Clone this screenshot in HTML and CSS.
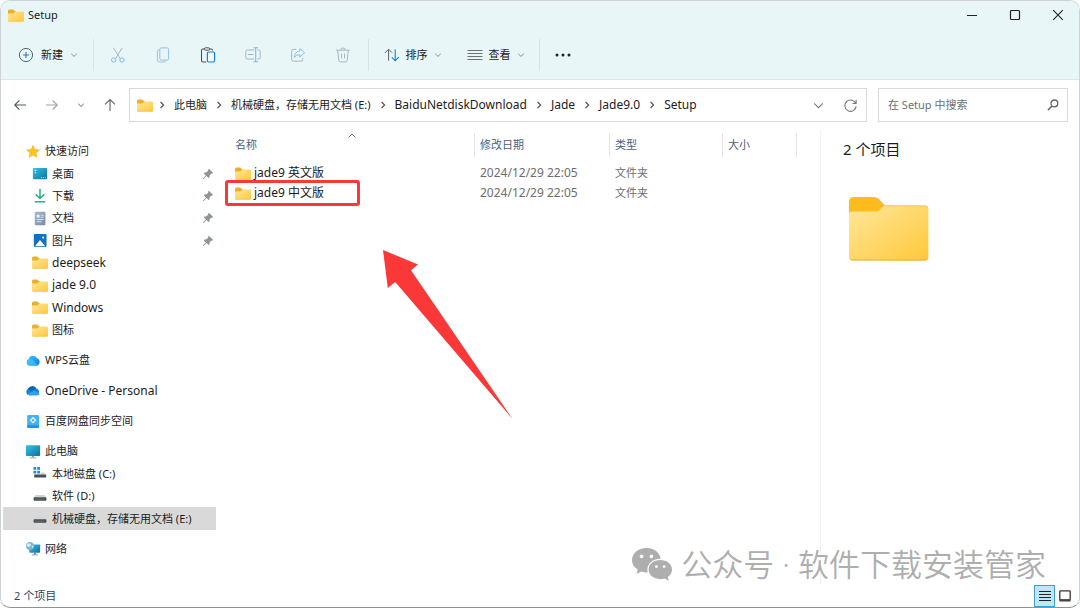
FILE: index.html
```html
<!DOCTYPE html>
<html lang="zh-CN">
<head>
<meta charset="utf-8">
<meta name="viewport" content="width=device-width, initial-scale=1">
<title>Setup</title>
<link rel="stylesheet" href="styles.css">
</head>
<body>
<svg class="defs" aria-hidden="true">
  <defs>
    <linearGradient id="folderFront" x1="0" y1="0" x2="1" y2="1">
      <stop offset="0" stop-color="#ffe79b"/><stop offset="1" stop-color="#ffc83a"/>
    </linearGradient>
    <linearGradient id="teal" x1="0" y1="0" x2="1" y2="1">
      <stop offset="0" stop-color="#35c5dd"/><stop offset="1" stop-color="#0d6fa8"/>
    </linearGradient>
    <linearGradient id="cloudBlue" x1="0" y1="0" x2="1" y2="1">
      <stop offset="0" stop-color="#38d0f5"/><stop offset="1" stop-color="#1a6cf0"/>
    </linearGradient>
    <linearGradient id="docGrey" x1="0" y1="0" x2="1" y2="1">
      <stop offset="0" stop-color="#a9bbd0"/><stop offset="1" stop-color="#7489a6"/>
    </linearGradient>
    <symbol id="folder" viewBox="0 0 16 13">
      <path d="M0 2.2Q0 .6 1.4.6H5.2L7 2.3H8V6H0z" fill="#eab02c"/>
      <path d="M0 4.6H5.4L7.3 2.4H14.8Q16 2.4 16 3.6V11.4Q16 12.6 14.8 12.6H1.2Q0 12.6 0 11.4z" fill="url(#folderFront)"/>
      <path d="M.6 12.3H15.4" stroke="#eeb83c" stroke-width=".6"/>
    </symbol>
    <symbol id="chev-down" viewBox="0 0 8 8"><path d="M1.2 2.8L4 5.4L6.8 2.8" fill="none" stroke="currentColor"/></symbol>
    <symbol id="chev-right" viewBox="0 0 8 8"><path d="M2.6 1L5.6 4L2.6 7" fill="none" stroke="currentColor" stroke-width="1.2"/></symbol>
    <symbol id="pin" viewBox="0 0 12 12">
      <path d="M6.9.8L11.2 5L10 5.8L9.3 5.6L7.6 7.4L7.5 9.4L6.6 10.1L4.5 8L1.6 11H1V10.4L3.9 7.4L1.8 5.4L2.6 4.4L4.6 4.3L6.3 2.6L6.1 1.8z" fill="#8d9498"/>
    </symbol>
    <symbol id="drive" viewBox="0 0 16 14">
      <path d="M3.6 5.4H12.4L14.2 8H1.8z" fill="#d3d5d5"/>
      <rect x="1.6" y="7.8" width="12.8" height="3.4" rx=".6" fill="#4b4f52"/>
      <path d="M3 9.7H12" stroke="#6d7174" stroke-width=".8"/>
    </symbol>
  </defs>
</svg>

<div class="window">
  <header class="chrome">
    <div class="titlebar">
      <svg class="ico-folder" viewBox="0 0 16 13"><use href="#folder"/></svg>
      <span class="window-title">Setup</span>
      <div class="window-controls">
        <button type="button" aria-label="最小化"><svg viewBox="0 0 12 12"><path d="M1 6.5H11" stroke="#222"/></svg></button>
        <button type="button" aria-label="最大化"><svg viewBox="0 0 12 12"><rect x="1.5" y="1.5" width="9" height="9" rx="1" fill="none" stroke="#222" stroke-width="1.2"/></svg></button>
        <button type="button" aria-label="关闭"><svg viewBox="0 0 12 12"><path d="M1.2 1.2L10.8 10.8M10.8 1.2L1.2 10.8" stroke="#222" stroke-width="1.1"/></svg></button>
      </div>
    </div>
    <div class="toolbar" role="toolbar" aria-label="命令">
      <button type="button" class="tool tool-new">
        <svg class="ico" viewBox="0 0 16 16" fill="none"><circle cx="8" cy="8" r="6.6" stroke="#5b6468"/><path d="M8 5V11M5 8H11" stroke="#1b7fd0" stroke-width="1.1"/></svg>
        <span>新建</span>
        <svg class="chev"><use href="#chev-down"/></svg>
      </button>
      <button type="button" class="tool tool-icon" aria-label="剪切" disabled>
        <svg class="ico" viewBox="0 0 16 16" fill="none"><path d="M3.4.8L10.2 11.6M12.2.8L5.6 11.6" stroke="#a9b6bb"/><circle cx="3.7" cy="13" r="2.2" stroke="#7fbbe6"/><circle cx="12" cy="13" r="2.2" stroke="#7fbbe6"/></svg>
      </button>
      <button type="button" class="tool tool-icon" aria-label="复制" disabled>
        <svg class="ico" viewBox="0 0 16 16" fill="none"><path d="M4.6 2.8H3.8Q2.4 2.8 2.4 4.2V13Q2.4 15 4.4 15H9.4Q10.8 15 10.8 13.6" stroke="#a9c3cc"/><rect x="4.8" y=".9" width="8.8" height="12.2" rx="1.4" stroke="#8cc1e6"/></svg>
      </button>
      <button type="button" class="tool tool-icon" aria-label="粘贴">
        <svg class="ico" viewBox="0 0 16 16" fill="none"><path d="M6.2 15H2.9Q1.5 15 1.5 13.6V3.4Q1.5 2 2.9 2H4.4M9.6 2H11.2Q12.6 2 12.6 3.6" stroke="#4a5054" stroke-width="1.1"/><rect x="4.4" y=".8" width="5.2" height="2.4" rx="1.1" stroke="#4a5054"/><rect x="7.4" y="5" width="7.2" height="10" rx="1.2" stroke="#1b7fd0" stroke-width="1.2" fill="#eef8fd"/></svg>
      </button>
      <button type="button" class="tool tool-icon" aria-label="重命名" disabled>
        <svg class="ico" viewBox="0 0 16 16" fill="none"><path d="M9 3H2.2Q.8 3 .8 4.4V10.6Q.8 12 2.2 12H9M12.4 3H13.8Q15.2 3 15.2 4.4V10.6Q15.2 12 13.8 12H12.4" stroke="#a9b6bb"/><path d="M8.4.8H13M10.7.8V14.8M8.4 14.8H13M3.2 7.5H8.4" stroke="#7fbbe6" stroke-width="1.1"/></svg>
      </button>
      <button type="button" class="tool tool-icon" aria-label="共享" disabled>
        <svg class="ico" viewBox="0 0 16 16" fill="none"><path d="M6.2 2.4H3.4Q1.6 2.4 1.6 4.2V12.4Q1.6 14.2 3.4 14.2H11Q12.8 14.2 12.8 12.4V11" stroke="#a9b6bb"/><path d="M9.8 1.6L14.6 5.8L9.8 10V7.6Q6.4 7.4 4.4 10.4Q4.8 4.6 9.8 4z" stroke="#8cc1e6" stroke-linejoin="round"/></svg>
      </button>
      <button type="button" class="tool tool-icon" aria-label="删除" disabled>
        <svg class="ico" viewBox="0 0 16 16" fill="none" stroke="#a9b6bb"><path d="M1.2 3.2H14.8M5.8 3Q5.8 1 8 1T10.2 3M2.6 3.2L3.8 13.4Q4 14.9 5.4 14.9H10.6Q12 14.9 12.2 13.4L13.4 3.2M6.5 6.6V11.4M9.5 6.6V11.4"/></svg>
      </button>
      <button type="button" class="tool tool-sort">
        <svg class="ico" viewBox="0 0 16 16" fill="none"><path d="M4.6 13.6V2.4M.8 6L4.6 2.2L8 5.6" stroke="#5b6468"/><path d="M11.2 2.4V13.6M7.8 10.4L11.2 13.8L14.8 10.2" stroke="#1b7fd0" stroke-width="1.1"/></svg>
        <span>排序</span>
        <svg class="chev"><use href="#chev-down"/></svg>
      </button>
      <button type="button" class="tool tool-view">
        <svg class="ico" viewBox="0 0 16 16"><path d="M.5 3.5H15.5M.5 6.5H15.5M.5 9.5H15.5M.5 12.5H15.5" stroke="#6a7276"/></svg>
        <span>查看</span>
        <svg class="chev"><use href="#chev-down"/></svg>
      </button>
      <button type="button" class="tool tool-more" aria-label="更多">
        <svg class="ico" viewBox="0 0 16 16" fill="#222"><circle cx="2" cy="8" r="1.5"/><circle cx="8" cy="8" r="1.5"/><circle cx="14" cy="8" r="1.5"/></svg>
      </button>
    </div>
  </header>

  <div class="location">
    <div class="history">
      <button type="button" aria-label="后退"><svg viewBox="0 0 14 14" fill="none" stroke="#555b5f" stroke-width="1.2"><path d="M13 7H2M6.4 2.4L1.8 7L6.4 11.6"/></svg></button>
      <button type="button" aria-label="前进"><svg viewBox="0 0 14 14" fill="none" stroke="#a0a4a6" stroke-width="1.2"><path d="M1 7H12M7.6 2.4L12.2 7L7.6 11.6"/></svg></button>
      <button type="button" class="recent" aria-label="最近"><svg class="chev"><use href="#chev-down"/></svg></button>
      <button type="button" aria-label="上一级"><svg viewBox="0 0 14 14" fill="none" stroke="#666b6e" stroke-width="1.2"><path d="M7 13V2M2 6.4L7 1.6L12 6.4"/></svg></button>
    </div>
    <nav class="address" aria-label="路径">
      <svg class="ico-folder" viewBox="0 0 16 13"><use href="#folder"/></svg>
      <ol class="crumbs">
        <li><svg class="sep"><use href="#chev-right"/></svg><a href="#">此电脑</a></li>
        <li><svg class="sep"><use href="#chev-right"/></svg><a href="#">机械硬盘，存储无用文档 (E:)</a></li>
        <li><svg class="sep"><use href="#chev-right"/></svg><a href="#" class="latin">BaiduNetdiskDownload</a></li>
        <li><svg class="sep"><use href="#chev-right"/></svg><a href="#" class="latin">Jade</a></li>
        <li><svg class="sep"><use href="#chev-right"/></svg><a href="#" class="latin">Jade9.0</a></li>
        <li><svg class="sep"><use href="#chev-right"/></svg><a href="#" class="latin">Setup</a></li>
      </ol>
      <button type="button" aria-label="展开"><svg viewBox="0 0 12 12" fill="none" stroke="#777"><path d="M2 4L6 8L10 4"/></svg></button>
      <button type="button" aria-label="刷新"><svg viewBox="0 0 12 12" fill="none" stroke="#777"><path d="M10.9 4.4A5.2 5.2 0 1 0 11.2 6.6M11.2 .8V4.2H7.8"/></svg></button>
    </nav>
    <form class="search" role="search">
      <input type="text" aria-label="搜索" placeholder="在 Setup 中搜索">
      <button type="submit" aria-label="搜索"><svg viewBox="0 0 12 12" fill="none" stroke="#666"><circle cx="7.4" cy="4.4" r="3.4" stroke-width="1.3"/><path d="M5 7L1 11" stroke-width="1.6"/></svg></button>
    </form>
  </div>

  <main class="content">
    <nav class="sidebar" aria-label="导航窗格">
      <ul class="tree">
        <li><a href="#"><svg viewBox="0 0 16 16"><path d="M8 1.4L10 5.8L14.8 6.3L11.2 9.5L12.2 14.3L8 11.8L3.8 14.3L4.8 9.5L1.2 6.3L6 5.8z" fill="#fcc419" stroke="#f5b312" stroke-width=".6" stroke-linejoin="round"/></svg>快速访问</a></li>
        <li class="child"><a href="#"><svg viewBox="0 0 16 16"><rect x=".4" y="2" width="15.2" height="12" rx="1" fill="url(#teal)"/><path d="M2.4 4.6H4M2.4 7.2H4" stroke="#d8f7ff" stroke-width="1.2"/><path d="M9 12.4H10.4M11.4 12.4H12.6M13.4 12.4H14.4" stroke="#a9dcf0"/></svg>桌面</a><svg class="pin"><use href="#pin"/></svg></li>
        <li class="child"><a href="#"><svg viewBox="0 0 16 16" fill="none"><path d="M8 1V11M3.4 6.8L8 11.2L12.6 6.8" stroke="#25b08b" stroke-width="1.6"/><path d="M2.4 14.6H13.6" stroke="#25b08b" stroke-width="1.6"/></svg>下载</a><svg class="pin"><use href="#pin"/></svg></li>
        <li class="child"><a href="#"><svg viewBox="0 0 16 16"><rect x="2.4" y=".8" width="11.4" height="14.4" rx="1" fill="url(#docGrey)"/><rect x="4.6" y="4" width="3" height="3" fill="#eef3f8"/><path d="M8.8 4.6H11.8M8.8 6.6H11.8M4.6 9H11.8M4.6 11.4H9.6" stroke="#dfe8f1"/></svg>文档</a><svg class="pin"><use href="#pin"/></svg></li>
        <li class="child"><a href="#"><svg viewBox="0 0 16 16"><rect x="1.4" y="1" width="13.6" height="14" rx="1.2" fill="#1670bd"/><path d="M2.6 14L8 7.4L13.6 14z" fill="#f2f9ff"/><circle cx="11.4" cy="4.8" r="1.2" fill="#d8efff"/></svg>图片</a><svg class="pin"><use href="#pin"/></svg></li>
        <li class="child"><a href="#" class="latin"><svg viewBox="0 0 16 13"><use href="#folder"/></svg>deepseek</a></li>
        <li class="child"><a href="#" class="latin"><svg viewBox="0 0 16 13"><use href="#folder"/></svg>jade 9.0</a></li>
        <li class="child"><a href="#" class="latin"><svg viewBox="0 0 16 13"><use href="#folder"/></svg>Windows</a></li>
        <li class="child"><a href="#"><svg viewBox="0 0 16 13"><use href="#folder"/></svg>图标</a></li>
        <li class="group"><a href="#"><svg viewBox="0 0 16 16"><path d="M4.6 13.6A3.8 3.8 0 0 1 3.4 6.4A4.6 4.6 0 0 1 12 5.4Q15.4 6.6 15 10Q14.4 13.6 11 13.6z" fill="url(#cloudBlue)"/><path d="M3.2 6.6Q7.4 6 9.4 9.2Q10.6 11.4 13.8 12.4Q12.6 13.6 11 13.6H4.6A3.8 3.8 0 0 1 3.2 6.6z" fill="#3acbf2" opacity=".7"/></svg>WPS云盘</a></li>
        <li class="group"><a href="#" class="latin"><svg viewBox="0 0 16 16"><path d="M4 13A3.6 3.6 0 0 1 2.8 6.2A5 5 0 0 1 11.6 5.8A3.9 3.9 0 0 1 12.4 13z" fill="#1283d6"/><path d="M2.8 6.2A5 5 0 0 1 11.6 5.8L6.2 9z" fill="#0f63b0"/><path d="M1.6 12L9.4 7.6L15.2 11.6Q14.4 13 12.4 13H4Q2.6 13 1.6 12z" fill="#2ba3ea"/></svg>OneDrive - Personal</a></li>
        <li class="group"><a href="#"><svg viewBox="0 0 16 16"><rect x="1.8" y="1" width="12.6" height="14" rx="1.4" fill="#42b3f5"/><path d="M1.8 12H14.4V13.6Q14.4 15 13 15H3.2Q1.8 15 1.8 13.6z" fill="#2c8de0"/><path d="M8 3L11.6 6.6L8 10.2L4.4 6.6z" fill="#e8f7ff"/><circle cx="8" cy="6.6" r="1.3" fill="#42b3f5"/></svg>百度网盘同步空间</a></li>
        <li class="group"><a href="#"><svg viewBox="0 0 16 16"><rect x=".4" y="1.4" width="15.2" height="11.4" rx="1" fill="url(#teal)"/><path d="M7 12.8H9V14.4H7z" fill="#8a9aa2"/><path d="M4.6 14.8H11.4" stroke="#98a6ad"/></svg>此电脑</a></li>
        <li class="child"><a href="#"><svg viewBox="0 0 16 16"><path d="M1 1H4V4H1zM5 1H8V4H5zM1 5H4V8H1zM5 5H8V8H5z" fill="#1e8fd8"/><path d="M8.6 7H12.6L14.4 9H3V8.6H8.600z" fill="#d3d5d5"/><rect x="1.8" y="9" width="12.8" height="3.2" rx=".6" fill="#4b4f52"/></svg>本地磁盘 (C:)</a></li>
        <li class="child"><a href="#"><svg viewBox="0 0 16 14"><use href="#drive"/></svg>软件 (D:)</a></li>
        <li class="child selected"><a href="#" aria-current="page"><svg viewBox="0 0 16 14"><use href="#drive"/></svg>机械硬盘，存储无用文档 (E:)</a></li>
        <li class="group"><a href="#"><svg viewBox="0 0 16 16"><rect x="4" y="3.6" width="11.6" height="9" rx=".8" fill="url(#teal)"/><path d="M9 12.6H11V14.4H9z" fill="#5b8296"/><path d="M7 14.8H13" stroke="#7897a5"/><circle cx="4.8" cy="5.2" r="4.2" fill="#7fb6cf"/><path d="M2 3Q4 1.6 5.4 3.2T3.6 6.4Q2 6.6 1.2 4.6zM6.4 6L8.4 4.6L8 7.4z" fill="#d5edf5"/></svg>网络</a></li>
      </ul>
    </nav>

    <section class="files" aria-label="文件">
      <table>
        <colgroup><col class="col-name"><col class="col-date"><col class="col-type"><col class="col-size"></colgroup>
        <thead>
          <tr><th scope="col">名称<svg class="sorted" viewBox="0 0 8 5"><path d="M.6 4.4L4 1L7.4 4.4" fill="none" stroke="#777"/></svg></th><th scope="col">修改日期</th><th scope="col">类型</th><th scope="col">大小</th></tr>
        </thead>
        <tbody>
          <tr><td><a href="#" class="latin"><svg class="ico-folder" viewBox="0 0 16 13"><use href="#folder"/></svg>jade9 英文版</a></td><td class="latin">2024/12/29 22:05</td><td>文件夹</td><td></td></tr>
          <tr><td><a href="#" class="latin marked"><svg class="ico-folder" viewBox="0 0 16 13"><use href="#folder"/></svg>jade9 中文版</a></td><td class="latin">2024/12/29 22:05</td><td>文件夹</td><td></td></tr>
        </tbody>
      </table>
      <svg class="arrow" viewBox="0 0 130 169" aria-hidden="true"><path d="M0 0L35 14.6L28 20.3L129.6 169L12.2 32L4.8 38z" fill="#fb3838"/></svg>
    </section>

    <aside class="preview">
      <h1>2 个项目</h1>
      <svg class="folder-large" viewBox="0 0 80 64">
        <path d="M0 5Q0 0 5 0H24Q29 0 31.6 4L36 8.6H42V20H0z" fill="#fdbb1e"/>
        <path d="M0 18Q0 14.600 3.600 14.600H26Q29 14.600 31 12.400L33 10.200Q34.600 8.600 37 8.600H76Q79.400 8.600 79.400 12V60Q79.400 63.400 76 63.400H3.600Q0 63.400 0 60z" fill="url(#folderFront)"/>
        <path d="M1 61.600Q2 63 3.600 63H76Q78 63 78.800 61.600" fill="none" stroke="#e6b23e"/>
        <path d="M37 8.900H76Q78.400 8.900 79 11" fill="none" stroke="#efc352" stroke-width=".8"/>
      </svg>
    </aside>
  </main>

  <footer class="status">
    <span>2 个项目</span>
    <div class="view-modes">
      <button type="button" class="active" aria-label="详细信息"><svg viewBox="0 0 12 12"><path d="M0 1.500H12M0 4.500H12M0 7.500H12M0 10.500H12" stroke="#222"/></svg></button>
      <button type="button" aria-label="大图标"><svg viewBox="0 0 12 12"><rect x=".8" y=".8" width="10.400" height="9" rx=".8" fill="#fff" stroke="#333" stroke-width="1.300"/><path d="M.4 10.600H11.600" stroke="#444" stroke-width="2"/></svg></button>
    </div>
  </footer>

  <div class="watermark">
    <svg viewBox="0 0 40 33" aria-hidden="true">
      <path d="M14.500 0C22 0 28 4.600 28.600 10.700C21 10.400 15 15.600 15.400 22.400Q15.500 23.500 15.800 24.400Q12.200 24.700 9.400 23.400L4.600 26L5.800 21.600C2 19.200 0 16 0 12.200C0 5.200 6.400 0 14.500 0z" fill="#aeaeae"/>
      <path d="M28.200 12C35 12 40 16.200 40 21.600C40 24.600 38.600 27.200 35.800 29L36.800 32.800L32.800 30.600C24 32.800 16.600 28.200 16.600 21.600C16.600 16.200 21.600 12 28.200 12z" fill="#aeaeae"/>
      <g fill="#fff"><circle cx="9.600" cy="8.400" r="1.800"/><circle cx="19.400" cy="8.400" r="1.800"/><circle cx="24.400" cy="18.600" r="1.400"/><circle cx="32.200" cy="18.600" r="1.400"/></g>
    </svg>
    <span>公众号 · 软件下载安装管家</span>
  </div>
</div>
</body>
</html>
```
FILE: styles.css
```css
*, *::before, *::after { box-sizing: border-box; }

body {
  margin: 0;
  background: #fff;
  color: #1c1c1c;
  font: 11px/16px "Noto Sans", "Noto Sans CJK SC", sans-serif;
}

.defs { position: absolute; width: 0; height: 0; }

svg { flex: none; display: block; }

button {
  display: flex;
  align-items: center;
  justify-content: center;
  padding: 0;
  border: 0;
  background: none;
  color: inherit;
  font: inherit;
}

a { color: inherit; text-decoration: none; }

ul, ol { margin: 0; padding: 0; list-style: none; }

/* Latin names run one step larger than the Chinese labels */
.latin { font-size: 12px; }

.window {
  position: relative;
  display: flex;
  flex-direction: column;
  min-height: 100vh;
  border: 1px solid #cdd3d4;
  border-bottom-color: #8e9293;
  border-radius: 10px;
  overflow: hidden;
}

.ico-folder { width: 16px; height: 13px; }
.ico { width: 16px; height: 16px; }
.chev { width: 8px; height: 8px; color: #8b9498; }

/* Title bar and command bar */
.chrome {
  background: #e8f6f8;
  border-bottom: 1px solid #dbe8ea;
}

.titlebar {
  display: flex;
  align-items: center;
  height: 28px;
  padding-left: 7px;
  gap: 4px;
}

.window-controls { display: flex; margin-left: auto; }
.window-controls button { width: 43px; height: 28px; }
.window-controls svg { width: 12px; height: 12px; }

.toolbar { display: flex; align-items: center; height: 50px; padding-top: 2px; }

.tool { height: 32px; gap: 6px; }
.tool-icon { width: 45px; }
.tool-new { width: 93px; padding-left: 2px; gap: 7px; border-right: 1px solid #d8e5e7; }
.tool-new + .tool-icon { margin-left: 1px; }
.tool-sort { width: 84px; margin-left: 3px; padding-left: 4px; border-left: 1px solid #d8e5e7; }
.tool-view { width: 88px; border-right: 1px solid #d8e5e7; }
.tool-more { width: 45px; }
.tool span { color: #222; }

/* Address row */
.location {
  display: flex;
  align-items: center;
  height: 50px;
  padding-right: 11px;
}

.history { display: flex; width: 128px; padding-left: 3px; }
.history button { width: 32px; height: 32px; }
.history svg { width: 14px; height: 14px; }
.history .recent { width: 26px; }
.history .recent svg { width: 8px; height: 8px; color: #666; }

.address {
  display: flex;
  flex: 1;
  align-items: center;
  height: 34px;
  padding-left: 7px;
  border: 1px solid #d9d9d9;
}
.address button { width: 32px; height: 32px; }
.address button svg { width: 13px; height: 13px; }

.crumbs { display: flex; flex: 1; padding-left: 5px; white-space: nowrap; }
.crumbs li { display: flex; align-items: center; }
.sep { width: 8px; height: 8px; margin: 0 8px; color: #555; }
.crumbs li:first-child .sep { margin-left: 0; }

.search {
  display: flex;
  width: 190px;
  height: 34px;
  margin-left: 11px;
  border: 1px solid #d9d9d9;
}
.search input {
  flex: 1;
  min-width: 0;
  padding: 0 0 0 9px;
  border: 0;
  outline: 0;
  background: none;
  font: inherit;
}
.search input::placeholder { color: #6f6f6f; opacity: 1; }
.search button { width: 28px; }
.search svg { width: 12px; height: 12px; }

/* Panes */
.content { display: flex; flex: 1; }

.sidebar { display: flex; width: 216px; padding: 10px 1px 25px 2px; }

.tree { display: flex; flex: 1; flex-direction: column; }
.tree li {
  display: flex;
  flex: 1;
  align-items: center;
  min-height: 22px;
  padding-left: 22px;
}
.tree .child { padding-left: 29px; }
.tree .group { margin-top: 8px; }
.tree a { display: flex; flex: 1; align-items: center; gap: 4px; white-space: nowrap; }
.tree a svg { width: 16px; height: 15px; }
.tree .pin { width: 12px; height: 12px; margin-right: 2px; }
.tree .selected { background: #d9d9d9; }

.files {
  position: relative;
  flex: 1;
  padding-top: 3px;
  border-right: 1px solid #f1f3f4;
}

table { table-layout: fixed; width: 580px; border-collapse: separate; border-spacing: 0; }
.col-name { width: 258px; }
.col-date { width: 135px; }
.col-type { width: 113px; }
.col-size { width: 74px; }

th, td { padding: 0 0 0 5px; text-align: left; font-weight: 400; white-space: nowrap; }
th { position: relative; height: 24px; border-right: 1px solid #e4e4e4; color: #4c607a; }
td { height: 20px; color: #6d6d6d; }
th:first-child, td:first-child { padding-left: 18px; }
tbody::before { display: block; height: 6px; content: ""; }
.sorted { position: absolute; top: 0; left: 131px; width: 8px; height: 5px; }

td a { position: relative; display: flex; align-items: center; gap: 3px; width: max-content; color: #1c1c1c; }
.marked::after {
  position: absolute;
  top: -5px;
  left: -10px;
  width: 135px;
  height: 26px;
  border: 3px solid #fb3838;
  border-radius: 3px;
  content: "";
}

.arrow { position: absolute; top: 120px; left: 166px; width: 130px; height: 169px; }

.preview { width: 258px; padding: 8px 22px; }
.preview h1 { margin: 0 0 37px; font-size: 15px; line-height: 22px; font-weight: 400; }
.folder-large { width: 80px; height: 64px; margin-left: 6px; }

/* Status bar */
.status {
  display: flex;
  align-items: center;
  justify-content: space-between;
  height: 22px;
  padding: 0 4px 0 13px;
  color: #2c4564;
}
.view-modes { display: flex; }
.view-modes button { width: 20px; height: 22px; }
.view-modes svg { width: 12px; height: 12px; }
.view-modes .active { width: 21px; border: 1px solid #3f9fc4; background: #bfe6f5; }

.watermark {
  position: absolute;
  right: 33px;
  bottom: 21px;
  display: flex;
  align-items: center;
  gap: 9px;
  color: #aeaeae;
  font: 350 31px/44px "Noto Sans", "Noto Sans CJK SC", sans-serif;
  white-space: nowrap;
  pointer-events: none;
}
.watermark svg { width: 40px; height: 33px; }
```
